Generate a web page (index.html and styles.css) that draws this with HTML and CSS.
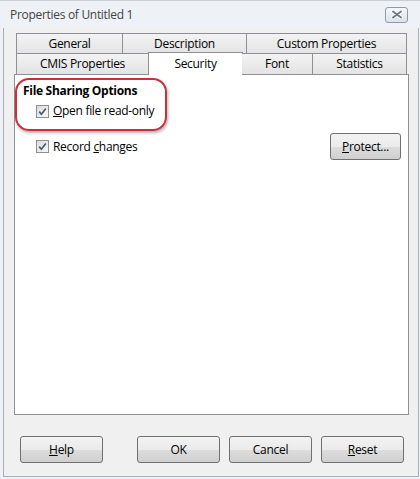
FILE: index.html
```html
<!DOCTYPE html>
<html lang="en">
<head>
  <meta charset="UTF-8">
  <title>Properties of Untitled 1</title>
  <link rel="stylesheet" href="styles.css">
</head>
<body>
  <div class="window">
    <div class="titlebar">
      <span class="title">Properties of Untitled 1</span>
      <button class="close" type="button" aria-label="Close">
        <svg width="12" height="9" viewBox="0 0 12 9">
          <path d="M2 1.5 L10 7.5 M10 1.5 L2 7.5" stroke="#fff" stroke-width="3.6" stroke-linecap="round"/>
          <path d="M2 1.5 L10 7.5 M10 1.5 L2 7.5" stroke="#6f7c8b" stroke-width="2" stroke-linecap="round"/>
        </svg>
      </button>
    </div>
    <div class="client">
      <div class="tabs">
        <div class="tab-row row-top">
          <div class="tab">General</div>
          <div class="tab">Description</div>
          <div class="tab">Custom Properties</div>
        </div>
        <div class="tab-row row-bottom">
          <div class="tab">CMIS Properties</div>
          <div class="tab active">Security</div>
          <div class="tab">Font</div>
          <div class="tab">Statistics</div>
        </div>
      </div>
      <div class="panel">
        <div class="highlight"></div>
        <div class="group-title">File Sharing Options</div>
        <label class="check first">
          <span class="box">
            <svg width="11" height="11" viewBox="0 0 11 11"><path d="M2.2 5.6 L4.4 8.2 L8.8 2.4" fill="none" stroke="#4a5a74" stroke-width="1.7"/></svg>
          </span>
          <span><u>O</u>pen file read-only</span>
        </label>
        <div class="row">
          <label class="check">
            <span class="box">
              <svg width="11" height="11" viewBox="0 0 11 11"><path d="M2.2 5.6 L4.4 8.2 L8.8 2.4" fill="none" stroke="#4a5a74" stroke-width="1.7"/></svg>
            </span>
            <span>Record <u>c</u>hanges</span>
          </label>
          <button class="btn protect" type="button"><u>P</u>rotect...</button>
        </div>
      </div>
      <div class="actions">
        <button class="btn" type="button"><u>H</u>elp</button>
        <div class="right-group">
          <button class="btn" type="button">OK</button>
          <button class="btn" type="button">Cancel</button>
          <button class="btn" type="button"><u>R</u>eset</button>
        </div>
      </div>
    </div>
  </div>
</body>
</html>
```

FILE: styles.css
```css
body {
  margin: 0;
  padding: 0;
  background: #fff;
  font-family: "Segoe UI", "Open Sans", "Noto Sans", sans-serif;
  font-size: 12px;
  letter-spacing: -0.3px;
  color: #000;
}
.window {
  width: 420px;
  height: 479px;
  box-sizing: border-box;
  background: #eef1f5;
  border-top: 1px solid #c9ced4;
  display: flex;
  flex-direction: column;
}
.titlebar {
  height: 27px;
  display: flex;
  align-items: center;
  justify-content: space-between;
  padding: 0 12px 0 10px;
}
.title {
  color: #444;
  font-size: 12px;
}
.close {
  width: 23px;
  height: 16px;
  padding: 0;
  border: 1px solid #8f9aa7;
  border-radius: 3px;
  background: linear-gradient(#f4f6f9, #dde3ea);
  display: flex;
  align-items: center;
  justify-content: center;
}
.client {
  flex: 1;
  margin: 0 1px 2px 3px;
  border: 1px solid #aab0b8;
  border-top: 0;
  background: #f0f0f0;
  padding: 5px 0 0 0;
  display: flex;
  flex-direction: column;
}
.tabs {
  margin: 0 10px 0 12px;
}
.tab-row {
  display: grid;
  height: 20px;
}
.row-top {
  grid-template-columns: 107px 124px 160px;
}
.row-bottom {
  grid-template-columns: 133px 93px 71px 94px;
  height: 21px;
  position: relative;
  z-index: 1;
}
.tab {
  box-sizing: border-box;
  border: 1px solid #8d9096;
  border-left: 0;
  border-bottom: 0;
  background: linear-gradient(#f3f3f3, #e3e3e3);
  text-align: center;
  line-height: 20px;
  white-space: nowrap;
}
.tab:first-child {
  border-left: 1px solid #8d9096;
}
.tab.active {
  background: #fff;
  margin: -1px -1px -1px -1px;
  border-left: 1px solid #8d9096;
  line-height: 21px;
}
.panel {
  position: relative;
  height: 341px;
  box-sizing: border-box;
  margin: 0 9px 0 10px;
  background: #fff;
  border: 1px solid #8d9096;
  padding: 8px 7px 0 8px;
}
.highlight {
  position: absolute;
  left: 0;
  top: 3px;
  width: 152px;
  height: 53px;
  box-sizing: border-box;
  border: 2px solid #c9303a;
  border-radius: 14px;
  box-shadow: 1px 2px 3px rgba(0, 0, 0, 0.3);
}
.group-title {
  font-weight: bold;
  line-height: 16px;
}
.check {
  display: flex;
  align-items: center;
  gap: 4px;
  padding-left: 13px;
  line-height: 16px;
}
.check.first {
  margin-top: 4px;
}
.box {
  width: 11px;
  height: 11px;
  border: 1px solid #8e8f8f;
  background: linear-gradient(135deg, #dcdcdc, #f8f8f8);
  display: flex;
}
.row {
  display: flex;
  align-items: center;
  justify-content: space-between;
  margin-top: 14px;
}
.btn {
  width: 83px;
  height: 27px;
  padding: 0;
  font-family: inherit;
  font-size: 12px;
  letter-spacing: -0.3px;
  color: #000;
  border: 1px solid #707070;
  border-radius: 3px;
  background: linear-gradient(#f2f2f2 0%, #ebebeb 50%, #dddddd 51%, #cfcfcf 100%);
}
.protect {
  width: 71px;
}
.actions {
  display: flex;
  justify-content: space-between;
  margin-top: 21px;
  padding: 0 14px 0 16px;
}
.right-group {
  display: flex;
  gap: 9px;
}
```
